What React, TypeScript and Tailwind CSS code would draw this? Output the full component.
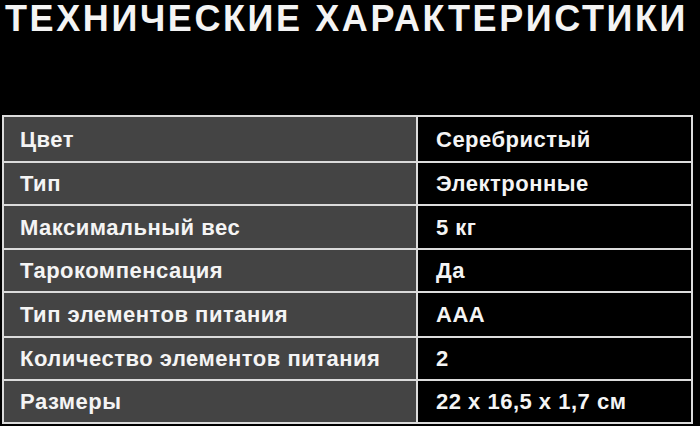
import React from "react";

const rows: { label: string; value: string; h: string }[] = [
  { label: "Цвет", value: "Серебристый", h: "h-[44px]" },
  { label: "Тип", value: "Электронные", h: "h-[43px]" },
  { label: "Максимальный вес", value: "5 кг", h: "h-[44px]" },
  { label: "Тарокомпенсация", value: "Да", h: "h-[43px]" },
  { label: "Тип элементов питания", value: "AAA", h: "h-[45px]" },
  { label: "Количество элементов питания", value: "2", h: "h-[43px]" },
  { label: "Размеры", value: "22 x 16,5 x 1,7 см", h: "h-[43px]" },
];

export default function App() {
  return (
    <div className="w-[700px] h-[426px] bg-black overflow-hidden font-['Liberation_Sans',Arial,sans-serif] text-[#f4f4f4]">
      <h1 className="pl-[5px] pt-[1px] text-[36px] leading-[36px] font-bold tracking-[2.6px] whitespace-nowrap">
        ТЕХНИЧЕСКИЕ ХАРАКТЕРИСТИКИ
      </h1>
      <div className="mt-[78px] ml-[2px] w-[691px] border-2 border-[#dcdcdc]">
        {rows.map((r, i) => (
          <div
            key={r.label}
            className={`flex ${r.h} ${i > 0 ? "border-t-2 border-[#dcdcdc]" : ""}`}
          >
            <div className="w-[414px] bg-[#444444] border-r-2 border-[#dcdcdc] flex items-center pl-4 text-[22px] tracking-[0.5px] font-bold">
              {r.label}
            </div>
            <div className="flex-1 bg-black flex items-center pl-[18px] text-[22px] tracking-[0.5px] font-bold">
              {r.value}
            </div>
          </div>
        ))}
      </div>
    </div>
  );
}
